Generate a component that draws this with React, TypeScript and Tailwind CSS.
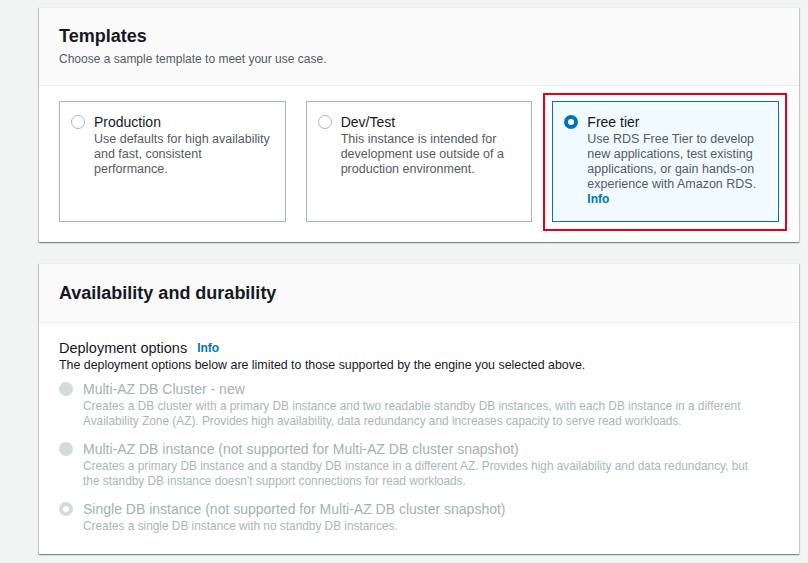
const font = { fontFamily: '"Liberation Sans", Arial, sans-serif' };

type Template = {
  title: string;
  lines: string[];
  selected?: boolean;
};

const templates: Template[] = [
  {
    title: "Production",
    lines: ["Use defaults for high availability", "and fast, consistent", "performance."],
  },
  {
    title: "Dev/Test",
    lines: ["This instance is intended for", "development use outside of a", "production environment."],
  },
  {
    title: "Free tier",
    lines: [
      "Use RDS Free Tier to develop",
      "new applications, test existing",
      "applications, or gain hands-on",
      "experience with Amazon RDS.",
    ],
    selected: true,
  },
];

const deployOptions = [
  {
    label: "Multi-AZ DB Cluster - new",
    lines: [
      "Creates a DB cluster with a primary DB instance and two readable standby DB instances, with each DB instance in a different",
      "Availability Zone (AZ). Provides high availability, data redundancy and increases capacity to serve read workloads.",
    ],
    checked: false,
  },
  {
    label: "Multi-AZ DB instance (not supported for Multi-AZ DB cluster snapshot)",
    lines: [
      "Creates a primary DB instance and a standby DB instance in a different AZ. Provides high availability and data redundancy, but",
      "the standby DB instance doesn't support connections for read workloads.",
    ],
    checked: false,
  },
  {
    label: "Single DB instance (not supported for Multi-AZ DB cluster snapshot)",
    lines: ["Creates a single DB instance with no standby DB instances."],
    checked: true,
  },
];

function Radio({ checked, disabled }: { checked?: boolean; disabled?: boolean }) {
  if (disabled) {
    return checked ? (
      <span className="block h-[14px] w-[14px] rounded-full border-[4px] border-[#d5dbdb] bg-white" />
    ) : (
      <span className="block h-[14px] w-[14px] rounded-full bg-[#d5dbdb]" />
    );
  }
  return checked ? (
    <span className="block h-[14px] w-[14px] rounded-full border-[4px] border-[#0073bb] bg-white" />
  ) : (
    <span className="block h-[14px] w-[14px] rounded-full border border-[#aab7b8] bg-white" />
  );
}

function Panel({ children }: { children: React.ReactNode }) {
  return (
    <div className="border-t border-[#eaeded] bg-white shadow-[0_1px_1px_0_rgba(0,28,36,0.3),1px_1px_1px_0_rgba(0,28,36,0.15),-1px_1px_1px_0_rgba(0,28,36,0.15)]">
      {children}
    </div>
  );
}

export default function App() {
  return (
    <div className="min-h-[563px] w-[808px] bg-[#f2f3f3] pt-[7px]" style={font}>
      <div className="ml-[39px] w-[760px]">
        <Panel>
          <div className="border-b border-[#eaeded] bg-[#fafafa] px-5 pt-[17px] pb-[18px]">
            <h2 className="text-[18px] font-bold leading-[22px] text-[#16191f]">Templates</h2>
            <p className="mt-[4px] text-[12px] leading-4 text-[#545b64]">
              Choose a sample template to meet your use case.
            </p>
          </div>
          <div className="grid grid-cols-3 gap-5 px-5 pt-[15px] pb-5">
            {templates.map((t) => (
              <div
                key={t.title}
                className={
                  t.selected
                    ? "relative h-[121px] border border-[#0073bb] bg-[#f1faff] pl-[11px] pt-[10px]"
                    : "relative h-[121px] border border-[#aab7b8] bg-white pl-[11px] pt-[10px]"
                }
              >
                {t.selected && (
                  <div className="pointer-events-none absolute -top-[9px] -right-[9px] -bottom-[10px] -left-[10px] border-2 border-[#e4001b]" />
                )}
                <div className="flex gap-[9px]">
                  <div className="flex h-5 items-center">
                    <Radio checked={t.selected} />
                  </div>
                  <div>
                    <div className="text-[14px] leading-5 text-[#16191f]">{t.title}</div>
                    {t.lines.map((l) => (
                      <div key={l} className="whitespace-nowrap text-[12.5px] leading-[15px] text-[#545b64]">
                        {l}
                      </div>
                    ))}
                    {t.selected && (
                      <div className="text-[12px] font-bold leading-[15px] text-[#0073bb]">Info</div>
                    )}
                  </div>
                </div>
              </div>
            ))}
          </div>
        </Panel>

        <div className="mt-[21px]">
          <Panel>
            <div className="border-b border-[#eaeded] bg-[#fafafa] px-5 pt-[18px] pb-[18px]">
              <h2 className="text-[18px] font-bold leading-[22px] text-[#16191f]">
                Availability and durability
              </h2>
            </div>
            <div className="px-5 pt-[15px] pb-5">
              <div className="flex items-center text-[14.5px] leading-5 text-[#16191f]">
                Deployment options
                <span className="ml-[10px] text-[12px] font-bold text-[#0073bb]">Info</span>
              </div>
              <p className="text-[12.4px] leading-[15px] text-[#16191f]">
                The deployment options below are limited to those supported by the engine you selected above.
              </p>
              <div className="mt-[6px] flex flex-col gap-[10px]">
                {deployOptions.map((o) => (
                  <div key={o.label} className="flex gap-[10px]">
                    <div className="flex h-5 items-center">
                      <Radio disabled checked={o.checked} />
                    </div>
                    <div>
                      <div className="text-[14px] leading-5 text-[#a4b1b2]">{o.label}</div>
                      {o.lines.map((l) => (
                        <div key={l} className="whitespace-nowrap text-[11.85px] leading-[15px] text-[#aab7b8]">
                          {l}
                        </div>
                      ))}
                    </div>
                  </div>
                ))}
              </div>
            </div>
          </Panel>
        </div>
      </div>
    </div>
  );
}
